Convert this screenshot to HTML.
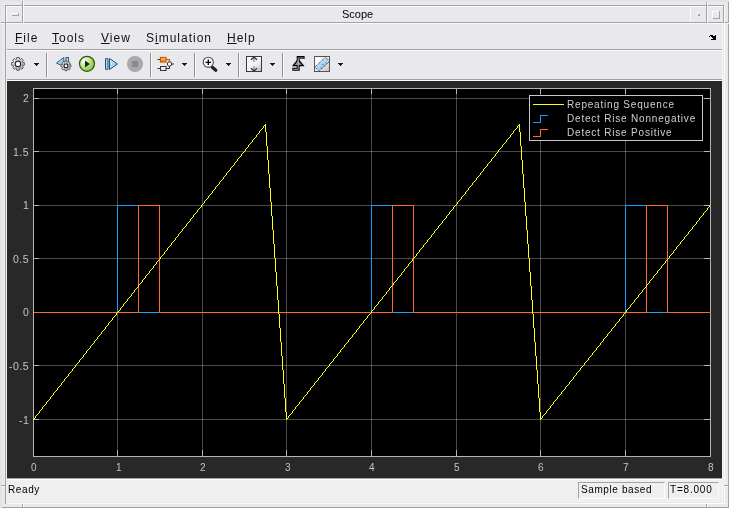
<!DOCTYPE html>
<html><head><meta charset="utf-8">
<style>
*{margin:0;padding:0;box-sizing:border-box}
html,body{width:729px;height:508px;overflow:hidden}
body{position:relative;background:#e9e8ec;font-family:"Liberation Sans",sans-serif;color:#000}
.a{position:absolute}
.d{position:absolute;background:#a3a3a3}
.w{position:absolute;background:#fbfbfb}
.t{position:absolute;white-space:nowrap;line-height:1;will-change:transform}
.mn{font-size:12px;top:32px;letter-spacing:1px;color:#111}
.mn u{text-decoration:underline;text-underline-offset:0.5px;text-decoration-thickness:1px}
.tl{position:absolute;will-change:transform;color:#c4c4c4;font-size:10.5px;letter-spacing:0.5px;line-height:1;white-space:nowrap}
.lg{position:absolute;will-change:transform;color:#d0d0d0;font-size:10px;letter-spacing:0.8px;line-height:1;white-space:nowrap;left:567px}
</style></head><body>
<!-- outer light edge -->
<div class="a" style="left:0;top:0;width:729px;height:2px;background:#e4e4e4"></div>
<div class="a" style="left:0;top:0;width:2px;height:508px;background:#e4e4e4"></div>
<!-- title bar -->
<div class="d" style="left:5px;top:5px;width:719px;height:1px"></div>
<div class="w" style="left:6px;top:6px;width:717px;height:1px"></div>
<div class="d" style="left:1px;top:22px;width:728px;height:1px"></div>
<div class="w" style="left:1px;top:23px;width:728px;height:1px"></div>
<div class="d" style="left:22px;top:1px;width:1px;height:22px"></div>
<div class="w" style="left:23px;top:1px;width:1px;height:22px"></div>
<div class="w" style="left:690px;top:6px;width:1px;height:16px"></div>
<div class="d" style="left:706px;top:2px;width:1px;height:21px"></div>
<div class="w" style="left:707px;top:2px;width:1px;height:21px"></div>
<div class="d" style="left:723px;top:5px;width:1px;height:18px"></div>
<div class="d" style="left:5px;top:5px;width:1px;height:18px"></div>
<div class="w" style="left:6px;top:6px;width:1px;height:16px"></div>
<!-- window menu dash -->
<div class="w" style="left:11px;top:13px;width:8px;height:1px"></div>
<div class="w" style="left:11px;top:13px;width:1px;height:2px"></div>
<div class="d" style="left:12px;top:15px;width:7px;height:1px"></div>
<div class="d" style="left:18px;top:13px;width:1px;height:3px"></div>
<!-- minimize dot -->
<div class="w" style="left:697px;top:13px;width:2px;height:2px"></div>
<div class="d" style="left:698px;top:14px;width:2px;height:2px"></div>
<!-- maximize box -->
<div class="w" style="left:712px;top:11px;width:7px;height:1px"></div>
<div class="w" style="left:712px;top:11px;width:1px;height:7px"></div>
<div class="d" style="left:713px;top:18px;width:7px;height:1px"></div>
<div class="d" style="left:719px;top:11px;width:1px;height:8px"></div>
<div class="t" style="left:342px;top:9px;font-size:11px">Scope</div>
<!-- left & right frame -->
<div class="d" style="left:5px;top:23px;width:1px;height:481px"></div>
<div class="a" style="left:6px;top:24px;width:1px;height:479px;background:#eeedf1"></div>
<div class="d" style="left:1px;top:485px;width:5px;height:1px"></div>
<div class="w" style="left:1px;top:486px;width:4px;height:1px"></div>
<div class="a" style="left:722px;top:24px;width:1px;height:480px;background:#f4f3f7"></div>
<div class="w" style="left:724px;top:6px;width:1px;height:498px"></div>
<div class="d" style="left:728px;top:2px;width:1px;height:21px"></div>
<div class="d" style="left:728px;top:24px;width:1px;height:484px"></div>
<div class="d" style="left:724px;top:485px;width:5px;height:1px"></div>
<div class="w" style="left:725px;top:486px;width:3px;height:1px"></div>
<!-- bottom frame -->
<div class="w" style="left:6px;top:503px;width:718px;height:1px"></div>
<div class="d" style="left:2px;top:507px;width:727px;height:1px"></div>
<div class="d" style="left:22px;top:504px;width:1px;height:4px"></div>
<div class="w" style="left:23px;top:504px;width:1px;height:3px"></div>
<div class="d" style="left:706px;top:504px;width:1px;height:4px"></div>
<div class="w" style="left:707px;top:504px;width:1px;height:3px"></div>
<!-- menu -->
<div class="t mn" style="left:15px"><u>F</u>ile</div>
<div class="t mn" style="left:52px"><u>T</u>ools</div>
<div class="t mn" style="left:101px"><u>V</u>iew</div>
<div class="t mn" style="left:146px">S<u>i</u>mulation</div>
<div class="t mn" style="left:227px"><u>H</u>elp</div>
<div class="d" style="left:7px;top:49px;width:715px;height:1px"></div>
<div class="w" style="left:7px;top:50px;width:715px;height:1px"></div>
<!--UNDOCK-->
<!-- toolbar -->
<svg class="a" style="left:0;top:51px" width="729" height="28">
<defs>
<linearGradient id="gg" x1="0" y1="0" x2="1" y2="1"><stop offset="0" stop-color="#f4f4f4"/><stop offset="1" stop-color="#a8a8a8"/></linearGradient>
<radialGradient id="grn" cx="0.3" cy="0.3" r="0.8"><stop offset="0" stop-color="#ffffff"/><stop offset="0.45" stop-color="#c2e890"/><stop offset="1" stop-color="#6ec43a"/></radialGradient>
<linearGradient id="blu" x1="0" y1="0" x2="1" y2="1"><stop offset="0" stop-color="#d8eefa"/><stop offset="1" stop-color="#7fbde6"/></linearGradient>
<linearGradient id="box" x1="0" y1="0" x2="1" y2="1"><stop offset="0" stop-color="#ffffff"/><stop offset="0.6" stop-color="#f0f0f0"/><stop offset="1" stop-color="#b8b8b8"/></linearGradient>
<linearGradient id="org" x1="0" y1="0" x2="0" y2="1"><stop offset="0" stop-color="#f8c890"/><stop offset="1" stop-color="#e07828"/></linearGradient>
<path id="gear" d="M4.78,-1.46 L6.38,-1.24 L6.38,1.24 L4.78,1.46 L4.41,2.35 L5.39,3.63 L3.63,5.39 L2.35,4.41 L1.46,4.78 L1.24,6.38 L-1.24,6.38 L-1.46,4.78 L-2.35,4.41 L-3.63,5.39 L-5.39,3.63 L-4.41,2.35 L-4.78,1.46 L-6.38,1.24 L-6.38,-1.24 L-4.78,-1.46 L-4.41,-2.35 L-5.39,-3.63 L-3.63,-5.39 L-2.35,-4.41 L-1.46,-4.78 L-1.24,-6.38 L1.24,-6.38 L1.46,-4.78 L2.35,-4.41 L3.63,-5.39 L5.39,-3.63 L4.41,-2.35Z"/>
</defs>
<!-- separators (y offset 51) -->
<g shape-rendering="crispEdges">
<rect x="46" y="2" width="1" height="24" fill="#8e8e8e"/><rect x="47" y="2" width="1" height="24" fill="#fbfbfb"/>
<rect x="150" y="2" width="1" height="24" fill="#8e8e8e"/><rect x="151" y="2" width="1" height="24" fill="#fbfbfb"/>
<rect x="194" y="2" width="1" height="24" fill="#8e8e8e"/><rect x="195" y="2" width="1" height="24" fill="#fbfbfb"/>
<rect x="238" y="2" width="1" height="24" fill="#8e8e8e"/><rect x="239" y="2" width="1" height="24" fill="#fbfbfb"/>
<rect x="282" y="2" width="1" height="24" fill="#8e8e8e"/><rect x="283" y="2" width="1" height="24" fill="#fbfbfb"/>
</g>
<!-- dropdown arrows -->
<g fill="#1a1a1a" shape-rendering="crispEdges">
<path d="M34 12h5v1h-1v1h-1v1h-1v-1h-1v-1h-1z"/>
<path d="M182 12h5v1h-1v1h-1v1h-1v-1h-1v-1h-1z"/>
<path d="M226 12h5v1h-1v1h-1v1h-1v-1h-1v-1h-1z"/>
<path d="M270 12h5v1h-1v1h-1v1h-1v-1h-1v-1h-1z"/>
<path d="M338 12h5v1h-1v1h-1v1h-1v-1h-1v-1h-1z"/>
</g>
<!-- gear config -->
<g transform="translate(18,12.9)">
<use href="#gear" fill="url(#gg)" stroke="#5a5a5a" stroke-width="1"/>
<circle r="2.7" fill="none" stroke="#2e2e2e" stroke-width="1.3"/>
<circle r="2" fill="#fff"/>
</g>
<!-- step back -->
<path d="M56.5 12 L63.8 6.5 V15.5 Z" fill="url(#blu)" stroke="#2d5f8c" stroke-width="1"/>
<rect x="66" y="6.5" width="2.5" height="6" fill="#b8dcf4" stroke="#2d5f8c" stroke-width="1"/>
<g transform="translate(66,14.8) scale(0.78)">
<use href="#gear" fill="url(#gg)" stroke="#484848" stroke-width="1.1"/>
<circle r="2.5" fill="none" stroke="#2a2a2a" stroke-width="1.6"/>
<circle r="1.5" fill="#fff"/>
</g>
<!-- play -->
<circle cx="87" cy="12.8" r="7.5" fill="url(#grn)" stroke="#2e5a0c" stroke-width="1.2"/>
<path d="M85 9.4 L89.8 12.9 L85 16.4 Z" fill="#222"/>
<!-- step forward -->
<rect x="105.5" y="7.5" width="2.5" height="11" rx="0.5" fill="#a8d4f0" stroke="#2a4f78" stroke-width="1"/>
<path d="M109.5 7.5 L117.5 13 L109.5 18.5 Z" fill="url(#blu)" stroke="#2a4f78" stroke-width="1"/>
<!-- stop -->
<circle cx="135" cy="13" r="8" fill="#a9a9a9"/>
<rect x="132" y="10" width="6" height="6" fill="#8a8a8a"/>
<!-- highlight block -->
<rect x="158.5" y="4.5" width="9" height="8" rx="2" fill="#fcd9a0" opacity="0.6"/>
<path d="M157.5 8.5H160" stroke="#333" stroke-width="1" fill="none"/>
<path d="M166 8.5H169.5V11" stroke="#c85a10" stroke-width="1.2" fill="none"/>
<rect x="160.5" y="6.5" width="5.5" height="4.5" fill="url(#org)" stroke="#c8560c" stroke-width="1.1"/>
<circle cx="169.5" cy="13" r="2.2" fill="#fafafa" stroke="#333" stroke-width="1"/>
<path d="M171.7 13H174M157.5 17.5H160M166 17.5H169.5V15.2" stroke="#333" stroke-width="1" fill="none"/>
<rect x="160.5" y="15.5" width="5.5" height="4" fill="#ededed" stroke="#333" stroke-width="1"/>
<!-- zoom -->
<path d="M212.3 16.3 L215.8 19.3" stroke="#222" stroke-width="3.2" stroke-linecap="round"/>
<circle cx="208.3" cy="11.3" r="5.1" fill="#f2f8fc" stroke="#505050" stroke-width="1.1"/>
<path d="M205.6 11.3H211M208.3 8.6V14" stroke="#000" stroke-width="1.3"/>
<!-- autoscale -->
<rect x="246.5" y="5.5" width="15" height="15" fill="url(#box)" stroke="#3a3a3a" stroke-width="1"/>
<path d="M251 8.7 L254 6.2 L257 8.7 M251 17.3 L254 19.8 L257 17.3" stroke="#2a2a2a" stroke-width="1.3" fill="none"/>
<path d="M254 7V11 M254 15V19" stroke="#8a8a8a" stroke-width="1.3"/>
<!-- trigger -->
<path d="M292.3 18.3H298.2V6.4H304.6" stroke="#000" stroke-width="3" fill="none" stroke-linejoin="miter"/>
<path d="M293.2 14.6 L298.2 8.6 L303.2 14.6 Z" fill="#8c8c8c" stroke="#000" stroke-width="1.3" stroke-linejoin="miter"/>
<path d="M293.2 18.3H298.2V7H303.8" stroke="#b4b4b4" stroke-width="0.9" fill="none"/>
<path d="M298.2 9.5V14.5" stroke="#a8a8a8" stroke-width="1.2"/>
<!-- ruler -->
<rect x="314.5" y="5.5" width="15" height="15" fill="url(#box)" stroke="#555" stroke-width="1"/>
<path d="M314.8 16.3 L325.4 6.1 L329.7 10.4 L319.3 20 Z" fill="url(#blu)" stroke="#1e1e1e" stroke-width="0.9" stroke-dasharray="1 1"/>
<path d="M321.9 17.6l-1.5 -1.5M324.5 15.2l-2 -2M327.1 12.8l-1.5 -1.5" stroke="#222" stroke-width="0.9" stroke-dasharray="1 0.8"/>
</svg>
<!-- undock arrow -->
<svg class="a" style="left:708px;top:34px" width="9" height="7" shape-rendering="crispEdges" fill="#000"><rect x="2" y="1" width="1" height="1"/><rect x="3" y="1" width="1" height="1"/><rect x="4" y="1" width="1" height="1"/><rect x="7" y="1" width="1" height="1"/><rect x="1" y="2" width="1" height="1"/><rect x="3" y="2" width="1" height="1"/><rect x="4" y="2" width="1" height="1"/><rect x="5" y="2" width="1" height="1"/><rect x="6" y="2" width="1" height="1"/><rect x="7" y="2" width="1" height="1"/><rect x="4" y="3" width="1" height="1"/><rect x="5" y="3" width="1" height="1"/><rect x="6" y="3" width="1" height="1"/><rect x="7" y="3" width="1" height="1"/><rect x="5" y="4" width="1" height="1"/><rect x="6" y="4" width="1" height="1"/><rect x="7" y="4" width="1" height="1"/><rect x="3" y="5" width="1" height="1"/><rect x="4" y="5" width="1" height="1"/><rect x="5" y="5" width="1" height="1"/><rect x="6" y="5" width="1" height="1"/><rect x="7" y="5" width="1" height="1"/></svg>

<div class="d" style="left:7px;top:79px;width:715px;height:1px"></div>
<div class="w" style="left:7px;top:80px;width:715px;height:1px"></div>
<!-- plot area -->
<div class="a" style="left:7px;top:81px;width:715px;height:397px;background:#282828"></div>
<svg width="729" height="508" style="position:absolute;left:0;top:0">
<rect x="33" y="88" width="678" height="369" fill="#000"/>
<g stroke="#fff" stroke-opacity="0.29" stroke-width="1" fill="none" shape-rendering="crispEdges"><path d="M117.5 89V456"/><path d="M202.5 89V456"/><path d="M286.5 89V456"/><path d="M371.5 89V456"/><path d="M456.5 89V456"/><path d="M540.5 89V456"/><path d="M625.5 89V456"/><path d="M34 98.5H710"/><path d="M34 151.5H710"/><path d="M34 205.5H710"/><path d="M34 258.5H710"/><path d="M34 312.5H710"/><path d="M34 365.5H710"/><path d="M34 419.5H710"/></g>
<path d="M117.5 450V456 M117.5 89V94 M202.5 450V456 M202.5 89V94 M286.5 450V456 M286.5 89V94 M371.5 450V456 M371.5 89V94 M456.5 450V456 M456.5 89V94 M540.5 450V456 M540.5 89V94 M625.5 450V456 M625.5 89V94 M34 98.5H39 M704 98.5H710 M34 151.5H39 M704 151.5H710 M34 205.5H39 M704 205.5H710 M34 258.5H39 M704 258.5H710 M34 312.5H39 M704 312.5H710 M34 365.5H39 M704 365.5H710 M34 419.5H39 M704 419.5H710" stroke="#b4b4b4" stroke-width="1" fill="none" shape-rendering="crispEdges"/>
<rect x="33.5" y="88.5" width="677" height="368" stroke="#b4b4b4" fill="none" shape-rendering="crispEdges"/>
<polyline points="33.50,312.50 117.50,312.50 117.50,205.50 138.50,205.50 138.50,312.50 371.50,312.50 371.50,205.50 392.50,205.50 392.50,312.50 625.50,312.50 625.50,205.50 646.50,205.50 646.50,312.50 710.50,312.50" stroke="#139fff" fill="none" shape-rendering="crispEdges"/>
<polyline points="33.50,312.50 138.50,312.50 138.50,205.50 159.50,205.50 159.50,312.50 392.50,312.50 392.50,205.50 413.50,205.50 413.50,312.50 646.50,312.50 646.50,205.50 667.50,205.50 667.50,312.50 710.50,312.50" stroke="#ff6929" fill="none" shape-rendering="crispEdges"/>
<path d="M33 419h1v1h-1zM34 418h1v1h-1zM35 416h1v2h-1zM36 415h1v1h-1zM37 414h1v1h-1zM38 413h1v1h-1zM39 411h1v2h-1zM40 410h1v1h-1zM41 409h1v1h-1zM42 407h1v2h-1zM43 406h1v1h-1zM44 405h1v1h-1zM45 404h1v1h-1zM46 402h1v2h-1zM47 401h1v1h-1zM48 400h1v1h-1zM49 399h1v1h-1zM50 397h1v2h-1zM51 396h1v1h-1zM52 395h1v1h-1zM53 393h1v2h-1zM54 392h1v1h-1zM55 391h1v1h-1zM56 390h1v1h-1zM57 388h1v2h-1zM58 387h1v1h-1zM59 386h1v1h-1zM60 385h1v1h-1zM61 383h1v2h-1zM62 382h1v1h-1zM63 381h1v1h-1zM64 379h1v2h-1zM65 378h1v1h-1zM66 377h1v1h-1zM67 376h1v1h-1zM68 374h1v2h-1zM69 373h1v1h-1zM70 372h1v1h-1zM71 371h1v1h-1zM72 369h1v2h-1zM73 368h1v1h-1zM74 367h1v1h-1zM75 365h1v2h-1zM76 364h1v1h-1zM77 363h1v1h-1zM78 362h1v1h-1zM79 360h1v2h-1zM80 359h1v1h-1zM81 358h1v1h-1zM82 357h1v1h-1zM83 355h1v2h-1zM84 354h1v1h-1zM85 353h1v1h-1zM86 351h1v2h-1zM87 350h1v1h-1zM88 349h1v1h-1zM89 348h1v1h-1zM90 346h1v2h-1zM91 345h1v1h-1zM92 344h1v1h-1zM93 343h1v1h-1zM94 341h1v2h-1zM95 340h1v1h-1zM96 339h1v1h-1zM97 337h1v2h-1zM98 336h1v1h-1zM99 335h1v1h-1zM100 334h1v1h-1zM101 332h1v2h-1zM102 331h1v1h-1zM103 330h1v1h-1zM104 329h1v1h-1zM105 327h1v2h-1zM106 326h1v1h-1zM107 325h1v1h-1zM108 323h1v2h-1zM109 322h1v1h-1zM110 321h1v1h-1zM111 320h1v1h-1zM112 318h1v2h-1zM113 317h1v1h-1zM114 316h1v1h-1zM115 315h1v1h-1zM116 313h1v2h-1zM117 312h1v1h-1zM118 311h1v1h-1zM119 310h1v1h-1zM120 308h1v2h-1zM121 307h1v1h-1zM122 306h1v1h-1zM123 304h1v2h-1zM124 303h1v1h-1zM125 302h1v1h-1zM126 301h1v1h-1zM127 299h1v2h-1zM128 298h1v1h-1zM129 297h1v1h-1zM130 296h1v1h-1zM131 294h1v2h-1zM132 293h1v1h-1zM133 292h1v1h-1zM134 290h1v2h-1zM135 289h1v1h-1zM136 288h1v1h-1zM137 287h1v1h-1zM138 285h1v2h-1zM139 284h1v1h-1zM140 283h1v1h-1zM141 282h1v1h-1zM142 280h1v2h-1zM143 279h1v1h-1zM144 278h1v1h-1zM145 276h1v2h-1zM146 275h1v1h-1zM147 274h1v1h-1zM148 273h1v1h-1zM149 271h1v2h-1zM150 270h1v1h-1zM151 269h1v1h-1zM152 268h1v1h-1zM153 266h1v2h-1zM154 265h1v1h-1zM155 264h1v1h-1zM156 262h1v2h-1zM157 261h1v1h-1zM158 260h1v1h-1zM159 259h1v1h-1zM160 257h1v2h-1zM161 256h1v1h-1zM162 255h1v1h-1zM163 254h1v1h-1zM164 252h1v2h-1zM165 251h1v1h-1zM166 250h1v1h-1zM167 248h1v2h-1zM168 247h1v1h-1zM169 246h1v1h-1zM170 245h1v1h-1zM171 243h1v2h-1zM172 242h1v1h-1zM173 241h1v1h-1zM174 240h1v1h-1zM175 238h1v2h-1zM176 237h1v1h-1zM177 236h1v1h-1zM178 234h1v2h-1zM179 233h1v1h-1zM180 232h1v1h-1zM181 231h1v1h-1zM182 229h1v2h-1zM183 228h1v1h-1zM184 227h1v1h-1zM185 226h1v1h-1zM186 224h1v2h-1zM187 223h1v1h-1zM188 222h1v1h-1zM189 221h1v1h-1zM190 219h1v2h-1zM191 218h1v1h-1zM192 217h1v1h-1zM193 215h1v2h-1zM194 214h1v1h-1zM195 213h1v1h-1zM196 212h1v1h-1zM197 210h1v2h-1zM198 209h1v1h-1zM199 208h1v1h-1zM200 207h1v1h-1zM201 205h1v2h-1zM202 204h1v1h-1zM203 203h1v1h-1zM204 201h1v2h-1zM205 200h1v1h-1zM206 199h1v1h-1zM207 198h1v1h-1zM208 196h1v2h-1zM209 195h1v1h-1zM210 194h1v1h-1zM211 193h1v1h-1zM212 191h1v2h-1zM213 190h1v1h-1zM214 189h1v1h-1zM215 187h1v2h-1zM216 186h1v1h-1zM217 185h1v1h-1zM218 184h1v1h-1zM219 182h1v2h-1zM220 181h1v1h-1zM221 180h1v1h-1zM222 179h1v1h-1zM223 177h1v2h-1zM224 176h1v1h-1zM225 175h1v1h-1zM226 173h1v2h-1zM227 172h1v1h-1zM228 171h1v1h-1zM229 170h1v1h-1zM230 168h1v2h-1zM231 167h1v1h-1zM232 166h1v1h-1zM233 165h1v1h-1zM234 163h1v2h-1zM235 162h1v1h-1zM236 161h1v1h-1zM237 159h1v2h-1zM238 158h1v1h-1zM239 157h1v1h-1zM240 156h1v1h-1zM241 154h1v2h-1zM242 153h1v1h-1zM243 152h1v1h-1zM244 151h1v1h-1zM245 149h1v2h-1zM246 148h1v1h-1zM247 147h1v1h-1zM248 145h1v2h-1zM249 144h1v1h-1zM250 143h1v1h-1zM251 142h1v1h-1zM252 140h1v2h-1zM253 139h1v1h-1zM254 138h1v1h-1zM255 137h1v1h-1zM256 135h1v2h-1zM257 134h1v1h-1zM258 133h1v1h-1zM259 131h1v2h-1zM260 130h1v1h-1zM261 129h1v1h-1zM262 128h1v1h-1zM263 126h1v2h-1zM264 125h1v1h-1zM265 124h1v8h-1zM266 132h1v14h-1zM267 146h1v14h-1zM268 160h1v14h-1zM269 174h1v14h-1zM270 188h1v14h-1zM271 202h1v14h-1zM272 216h1v14h-1zM273 230h1v14h-1zM274 244h1v14h-1zM275 258h1v14h-1zM276 272h1v14h-1zM277 286h1v14h-1zM278 300h1v14h-1zM279 314h1v14h-1zM280 328h1v14h-1zM281 342h1v14h-1zM282 356h1v14h-1zM283 370h1v14h-1zM284 384h1v14h-1zM285 398h1v14h-1zM286 412h1v8h-1zM287 418h1v1h-1zM288 416h1v2h-1zM289 415h1v1h-1zM290 414h1v1h-1zM291 413h1v1h-1zM292 411h1v2h-1zM293 410h1v1h-1zM294 409h1v1h-1zM295 407h1v2h-1zM296 406h1v1h-1zM297 405h1v1h-1zM298 404h1v1h-1zM299 402h1v2h-1zM300 401h1v1h-1zM301 400h1v1h-1zM302 399h1v1h-1zM303 397h1v2h-1zM304 396h1v1h-1zM305 395h1v1h-1zM306 394h1v1h-1zM307 392h1v2h-1zM308 391h1v1h-1zM309 390h1v1h-1zM310 388h1v2h-1zM311 387h1v1h-1zM312 386h1v1h-1zM313 385h1v1h-1zM314 383h1v2h-1zM315 382h1v1h-1zM316 381h1v1h-1zM317 380h1v1h-1zM318 378h1v2h-1zM319 377h1v1h-1zM320 376h1v1h-1zM321 375h1v1h-1zM322 373h1v2h-1zM323 372h1v1h-1zM324 371h1v1h-1zM325 369h1v2h-1zM326 368h1v1h-1zM327 367h1v1h-1zM328 366h1v1h-1zM329 364h1v2h-1zM330 363h1v1h-1zM331 362h1v1h-1zM332 361h1v1h-1zM333 359h1v2h-1zM334 358h1v1h-1zM335 357h1v1h-1zM336 356h1v1h-1zM337 354h1v2h-1zM338 353h1v1h-1zM339 352h1v1h-1zM340 350h1v2h-1zM341 349h1v1h-1zM342 348h1v1h-1zM343 347h1v1h-1zM344 345h1v2h-1zM345 344h1v1h-1zM346 343h1v1h-1zM347 342h1v1h-1zM348 340h1v2h-1zM349 339h1v1h-1zM350 338h1v1h-1zM351 337h1v1h-1zM352 335h1v2h-1zM353 334h1v1h-1zM354 333h1v1h-1zM355 332h1v1h-1zM356 330h1v2h-1zM357 329h1v1h-1zM358 328h1v1h-1zM359 326h1v2h-1zM360 325h1v1h-1zM361 324h1v1h-1zM362 323h1v1h-1zM363 321h1v2h-1zM364 320h1v1h-1zM365 319h1v1h-1zM366 318h1v1h-1zM367 316h1v2h-1zM368 315h1v1h-1zM369 314h1v1h-1zM370 313h1v1h-1zM371 311h1v2h-1zM372 310h1v1h-1zM373 309h1v1h-1zM374 307h1v2h-1zM375 306h1v1h-1zM376 305h1v1h-1zM377 304h1v1h-1zM378 302h1v2h-1zM379 301h1v1h-1zM380 300h1v1h-1zM381 299h1v1h-1zM382 297h1v2h-1zM383 296h1v1h-1zM384 295h1v1h-1zM385 294h1v1h-1zM386 292h1v2h-1zM387 291h1v1h-1zM388 290h1v1h-1zM389 288h1v2h-1zM390 287h1v1h-1zM391 286h1v1h-1zM392 285h1v1h-1zM393 283h1v2h-1zM394 282h1v1h-1zM395 281h1v1h-1zM396 280h1v1h-1zM397 278h1v2h-1zM398 277h1v1h-1zM399 276h1v1h-1zM400 275h1v1h-1zM401 273h1v2h-1zM402 272h1v1h-1zM403 271h1v1h-1zM404 269h1v2h-1zM405 268h1v1h-1zM406 267h1v1h-1zM407 266h1v1h-1zM408 264h1v2h-1zM409 263h1v1h-1zM410 262h1v1h-1zM411 261h1v1h-1zM412 259h1v2h-1zM413 258h1v1h-1zM414 257h1v1h-1zM415 256h1v1h-1zM416 254h1v2h-1zM417 253h1v1h-1zM418 252h1v1h-1zM419 250h1v2h-1zM420 249h1v1h-1zM421 248h1v1h-1zM422 247h1v1h-1zM423 245h1v2h-1zM424 244h1v1h-1zM425 243h1v1h-1zM426 242h1v1h-1zM427 240h1v2h-1zM428 239h1v1h-1zM429 238h1v1h-1zM430 237h1v1h-1zM431 235h1v2h-1zM432 234h1v1h-1zM433 233h1v1h-1zM434 231h1v2h-1zM435 230h1v1h-1zM436 229h1v1h-1zM437 228h1v1h-1zM438 226h1v2h-1zM439 225h1v1h-1zM440 224h1v1h-1zM441 223h1v1h-1zM442 221h1v2h-1zM443 220h1v1h-1zM444 219h1v1h-1zM445 218h1v1h-1zM446 216h1v2h-1zM447 215h1v1h-1zM448 214h1v1h-1zM449 212h1v2h-1zM450 211h1v1h-1zM451 210h1v1h-1zM452 209h1v1h-1zM453 207h1v2h-1zM454 206h1v1h-1zM455 205h1v1h-1zM456 204h1v1h-1zM457 202h1v2h-1zM458 201h1v1h-1zM459 200h1v1h-1zM460 199h1v1h-1zM461 197h1v2h-1zM462 196h1v1h-1zM463 195h1v1h-1zM464 194h1v1h-1zM465 192h1v2h-1zM466 191h1v1h-1zM467 190h1v1h-1zM468 188h1v2h-1zM469 187h1v1h-1zM470 186h1v1h-1zM471 185h1v1h-1zM472 183h1v2h-1zM473 182h1v1h-1zM474 181h1v1h-1zM475 180h1v1h-1zM476 178h1v2h-1zM477 177h1v1h-1zM478 176h1v1h-1zM479 175h1v1h-1zM480 173h1v2h-1zM481 172h1v1h-1zM482 171h1v1h-1zM483 169h1v2h-1zM484 168h1v1h-1zM485 167h1v1h-1zM486 166h1v1h-1zM487 164h1v2h-1zM488 163h1v1h-1zM489 162h1v1h-1zM490 161h1v1h-1zM491 159h1v2h-1zM492 158h1v1h-1zM493 157h1v1h-1zM494 156h1v1h-1zM495 154h1v2h-1zM496 153h1v1h-1zM497 152h1v1h-1zM498 150h1v2h-1zM499 149h1v1h-1zM500 148h1v1h-1zM501 147h1v1h-1zM502 145h1v2h-1zM503 144h1v1h-1zM504 143h1v1h-1zM505 142h1v1h-1zM506 140h1v2h-1zM507 139h1v1h-1zM508 138h1v1h-1zM509 137h1v1h-1zM510 135h1v2h-1zM511 134h1v1h-1zM512 133h1v1h-1zM513 131h1v2h-1zM514 130h1v1h-1zM515 129h1v1h-1zM516 128h1v1h-1zM517 126h1v2h-1zM518 125h1v1h-1zM519 124h1v8h-1zM520 132h1v14h-1zM521 146h1v14h-1zM522 160h1v14h-1zM523 174h1v14h-1zM524 188h1v14h-1zM525 202h1v14h-1zM526 216h1v14h-1zM527 230h1v14h-1zM528 244h1v14h-1zM529 258h1v14h-1zM530 272h1v14h-1zM531 286h1v14h-1zM532 300h1v14h-1zM533 314h1v14h-1zM534 328h1v14h-1zM535 342h1v14h-1zM536 356h1v14h-1zM537 370h1v14h-1zM538 384h1v14h-1zM539 398h1v14h-1zM540 412h1v8h-1zM541 418h1v1h-1zM542 416h1v2h-1zM543 415h1v1h-1zM544 414h1v1h-1zM545 413h1v1h-1zM546 411h1v2h-1zM547 410h1v1h-1zM548 409h1v1h-1zM549 408h1v1h-1zM550 406h1v2h-1zM551 405h1v1h-1zM552 404h1v1h-1zM553 402h1v2h-1zM554 401h1v1h-1zM555 400h1v1h-1zM556 399h1v1h-1zM557 397h1v2h-1zM558 396h1v1h-1zM559 395h1v1h-1zM560 394h1v1h-1zM561 392h1v2h-1zM562 391h1v1h-1zM563 390h1v1h-1zM564 389h1v1h-1zM565 387h1v2h-1zM566 386h1v1h-1zM567 385h1v1h-1zM568 384h1v1h-1zM569 382h1v2h-1zM570 381h1v1h-1zM571 380h1v1h-1zM572 379h1v1h-1zM573 377h1v2h-1zM574 376h1v1h-1zM575 375h1v1h-1zM576 373h1v2h-1zM577 372h1v1h-1zM578 371h1v1h-1zM579 370h1v1h-1zM580 368h1v2h-1zM581 367h1v1h-1zM582 366h1v1h-1zM583 365h1v1h-1zM584 363h1v2h-1zM585 362h1v1h-1zM586 361h1v1h-1zM587 360h1v1h-1zM588 358h1v2h-1zM589 357h1v1h-1zM590 356h1v1h-1zM591 355h1v1h-1zM592 353h1v2h-1zM593 352h1v1h-1zM594 351h1v1h-1zM595 350h1v1h-1zM596 348h1v2h-1zM597 347h1v1h-1zM598 346h1v1h-1zM599 345h1v1h-1zM600 343h1v2h-1zM601 342h1v1h-1zM602 341h1v1h-1zM603 339h1v2h-1zM604 338h1v1h-1zM605 337h1v1h-1zM606 336h1v1h-1zM607 334h1v2h-1zM608 333h1v1h-1zM609 332h1v1h-1zM610 331h1v1h-1zM611 329h1v2h-1zM612 328h1v1h-1zM613 327h1v1h-1zM614 326h1v1h-1zM615 324h1v2h-1zM616 323h1v1h-1zM617 322h1v1h-1zM618 321h1v1h-1zM619 319h1v2h-1zM620 318h1v1h-1zM621 317h1v1h-1zM622 316h1v1h-1zM623 314h1v2h-1zM624 313h1v1h-1zM625 312h1v1h-1zM626 310h1v2h-1zM627 309h1v1h-1zM628 308h1v1h-1zM629 307h1v1h-1zM630 305h1v2h-1zM631 304h1v1h-1zM632 303h1v1h-1zM633 302h1v1h-1zM634 300h1v2h-1zM635 299h1v1h-1zM636 298h1v1h-1zM637 297h1v1h-1zM638 295h1v2h-1zM639 294h1v1h-1zM640 293h1v1h-1zM641 292h1v1h-1zM642 290h1v2h-1zM643 289h1v1h-1zM644 288h1v1h-1zM645 287h1v1h-1zM646 285h1v2h-1zM647 284h1v1h-1zM648 283h1v1h-1zM649 281h1v2h-1zM650 280h1v1h-1zM651 279h1v1h-1zM652 278h1v1h-1zM653 276h1v2h-1zM654 275h1v1h-1zM655 274h1v1h-1zM656 273h1v1h-1zM657 271h1v2h-1zM658 270h1v1h-1zM659 269h1v1h-1zM660 268h1v1h-1zM661 266h1v2h-1zM662 265h1v1h-1zM663 264h1v1h-1zM664 263h1v1h-1zM665 261h1v2h-1zM666 260h1v1h-1zM667 259h1v1h-1zM668 258h1v1h-1zM669 256h1v2h-1zM670 255h1v1h-1zM671 254h1v1h-1zM672 253h1v1h-1zM673 251h1v2h-1zM674 250h1v1h-1zM675 249h1v1h-1zM676 247h1v2h-1zM677 246h1v1h-1zM678 245h1v1h-1zM679 244h1v1h-1zM680 242h1v2h-1zM681 241h1v1h-1zM682 240h1v1h-1zM683 239h1v1h-1zM684 237h1v2h-1zM685 236h1v1h-1zM686 235h1v1h-1zM687 234h1v1h-1zM688 232h1v2h-1zM689 231h1v1h-1zM690 230h1v1h-1zM691 229h1v1h-1zM692 227h1v2h-1zM693 226h1v1h-1zM694 225h1v1h-1zM695 224h1v1h-1zM696 222h1v2h-1zM697 221h1v1h-1zM698 220h1v1h-1zM699 218h1v2h-1zM700 217h1v1h-1zM701 216h1v1h-1zM702 215h1v1h-1zM703 213h1v2h-1zM704 212h1v1h-1zM705 211h1v1h-1zM706 210h1v1h-1zM707 208h1v2h-1zM708 207h1v1h-1zM709 206h1v1h-1z" fill="#ffff11" shape-rendering="crispEdges"/>
<rect x="529.5" y="95.5" width="173" height="45" fill="#000" stroke="#c8c8c8" shape-rendering="crispEdges"/>
<path d="M533 104.5H564" stroke="#ffff11" shape-rendering="crispEdges"/>
<path d="M533 122.5H540.5V115.5H548" stroke="#139fff" fill="none" shape-rendering="crispEdges"/>
<path d="M533 136.5H540.5V129.5H548" stroke="#ff6929" fill="none" shape-rendering="crispEdges"/>
</svg>
<div class="tl" style="left:23px;top:93px">2</div>
<div class="tl" style="left:13px;top:147px">1.5</div>
<div class="tl" style="left:23px;top:200px">1</div>
<div class="tl" style="left:13px;top:254px">0.5</div>
<div class="tl" style="left:23px;top:307px">0</div>
<div class="tl" style="left:9px;top:361px">-0.5</div>
<div class="tl" style="left:19px;top:415px">-1</div>
<div class="tl" style="left:31px;top:462.6px;font-size:10px">0</div>
<div class="tl" style="left:116px;top:462.6px;font-size:10px">1</div>
<div class="tl" style="left:200px;top:462.6px;font-size:10px">2</div>
<div class="tl" style="left:285px;top:462.6px;font-size:10px">3</div>
<div class="tl" style="left:369px;top:462.6px;font-size:10px">4</div>
<div class="tl" style="left:454px;top:462.6px;font-size:10px">5</div>
<div class="tl" style="left:538px;top:462.6px;font-size:10px">6</div>
<div class="tl" style="left:623px;top:462.6px;font-size:10px">7</div>
<div class="tl" style="left:708px;top:462.6px;font-size:10px">8</div>
<div class="lg" style="top:100px">Repeating Sequence</div>
<div class="lg" style="top:114px">Detect Rise Nonnegative</div>
<div class="lg" style="top:128px">Detect Rise Positive</div>
<!-- status bar -->
<div class="d" style="left:7px;top:478px;width:715px;height:1px"></div>
<div class="a" style="left:7px;top:479px;width:715px;height:23px;background:#efefef;border-top:1px solid #fbfbfb"></div>
<div class="t" style="left:8px;top:485px;font-size:10px;letter-spacing:0.6px">Ready</div>
<div class="a" style="left:578px;top:482px;width:87px;height:17px;border:1px solid;border-color:#a3a3a3 #fbfbfb #fbfbfb #a3a3a3"></div>
<div class="t" style="left:581px;top:485px;font-size:10px;letter-spacing:0.6px">Sample based</div>
<div class="a" style="left:668px;top:482px;width:51px;height:17px;border:1px solid;border-color:#a3a3a3 #fbfbfb #fbfbfb #a3a3a3"></div>
<div class="t" style="left:670px;top:485px;font-size:10px;letter-spacing:0.8px">T=8.000</div>
</body></html>
